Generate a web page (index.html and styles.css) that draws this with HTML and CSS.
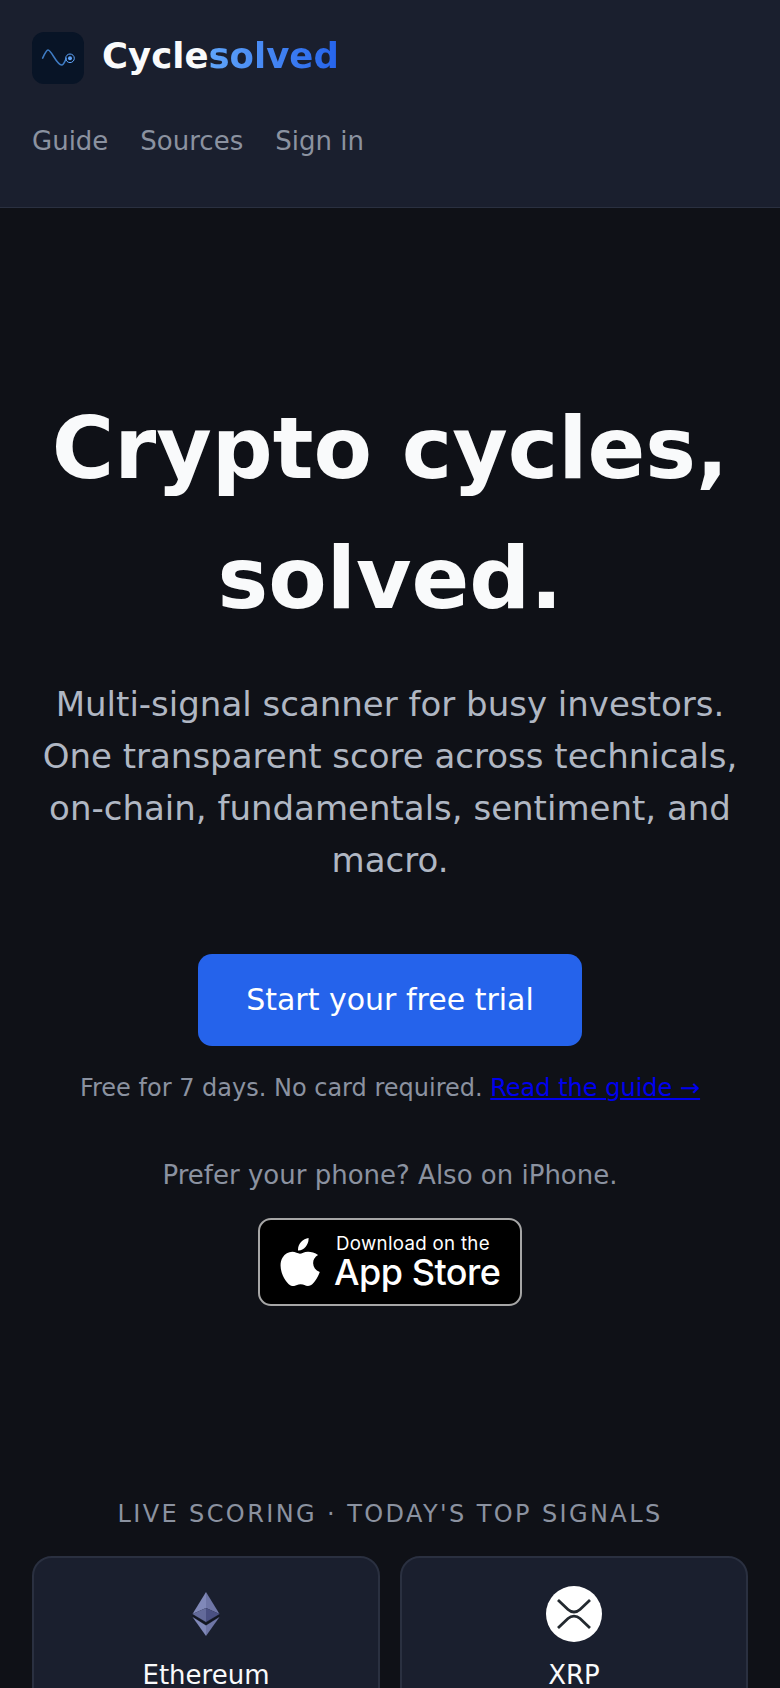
FILE: index.html
```html
<!DOCTYPE html>
<html lang="en">
<head>
<meta charset="utf-8">
<title>Cyclesolved</title>
<link rel="stylesheet" href="styles.css">
</head>
<body>
<header class="site-header">
  <a class="brand">
    <svg class="brand-mark" viewBox="0 0 52 52" aria-hidden="true">
      <rect width="52" height="52" rx="12" fill="#081426"/>
      <path d="M10.700 26C12.500 22 14.300 18 16 18C19.500 18 24.500 33 29.700 33C31.700 33 33 29 34.300 26.500" fill="none" stroke="#3f7cc4" stroke-width="1.700" stroke-linecap="round"/>
      <circle cx="38" cy="26.300" r="4.300" fill="none" stroke="#60a5fa" stroke-width="1"/>
      <circle cx="38" cy="26.300" r="2" fill="#60a5fa"/>
    </svg>
    <span class="brand-name">Cycle<span class="brand-accent">solved</span></span>
  </a>
  <nav class="site-nav">
    <a>Guide</a>
    <a>Sources</a>
    <a>Sign in</a>
  </nav>
</header>
<main>
  <section class="hero">
    <h1>Crypto cycles, solved.</h1>
    <p class="lede">Multi-signal scanner for busy investors. One transparent score across technicals, on-chain, fundamentals, sentiment, and macro.</p>
    <a class="cta">Start your free trial</a>
    <p class="fine">Free for 7 days. No card required. <a href="#guide">Read the guide →</a></p>
    <p class="phone">Prefer your phone? Also on iPhone.</p>
    <a class="store">
      <svg class="apple" viewBox="3.500 2 35 43" aria-hidden="true" preserveAspectRatio="none">
        <path fill="#fff" d="M28.500 2C28.700 5.500 27.500 8 25.800 10C24 12.100 21.800 13.300 19.300 13.100C19 10 20.300 7.300 21.900 5.500C23.600 3.500 26.300 2.200 28.500 2ZM36.800 17.300C33.900 19.100 32.400 21.500 32.500 24.700C32.600 28.400 34.600 31 38.300 32.500C37.400 35.300 36 37.900 34.300 40.300C32.500 42.800 30.700 45 28 45C25.400 45 24.500 43.500 21.500 43.500C18.500 43.500 17.500 45 15 45.100C12.300 45.200 10.200 42.600 8.400 40C4.800 34.800 2 25.800 5.800 19.500C7.700 16.400 10.900 14.400 14.300 14.400C16.900 14.400 19.200 16.100 20.900 16.100C22.500 16.100 25.100 14.100 28.300 14.300C30.500 14.400 34.300 14.900 36.800 17.300Z"/>
      </svg>
      <span class="store-text">
        <span class="store-small">Download on the</span>
        <span class="store-big">App Store</span>
      </span>
    </a>
  </section>
  <section class="signals">
    <h2>LIVE SCORING · TODAY'S TOP SIGNALS</h2>
    <div class="signal-grid">
      <article class="signal-card">
        <svg class="coin" viewBox="0 0 56 56" aria-hidden="true">
          <polygon points="28,6 14.500,28 28,22" fill="#8088b8"/>
          <polygon points="28,6 41.500,28 28,22" fill="#6f76a6"/>
          <polygon points="14.500,28 28,22 28,36" fill="#636a9a"/>
          <polygon points="41.500,28 28,22 28,36" fill="#4a5082"/>
          <polygon points="14.500,31 28,39.500 28,50" fill="#8088b8"/>
          <polygon points="41.500,31 28,39.500 28,50" fill="#6f76a6"/>
          <polyline points="14.500,29.500 28,37.700 41.500,29.500" fill="none" stroke="#12151f" stroke-width="1.300"/>
        </svg>
        <h3>Ethereum</h3>
      </article>
      <article class="signal-card">
        <svg class="coin" viewBox="0 0 56 56" aria-hidden="true">
          <circle cx="28" cy="28" r="28" fill="#fff"/>
          <path d="M12 14L22 23.500C25.500 26.800 30.500 26.800 34 23.500L44 14M12 42L22 32.500C25.500 29.200 30.500 29.200 34 32.500L44 42" fill="none" stroke="#23292f" stroke-width="2.800"/>
        </svg>
        <h3>XRP</h3>
      </article>
    </div>
  </section>
</main>
</body>
</html>
```
FILE: styles.css
```css
* { box-sizing: border-box; }
html, body { margin: 0; padding: 0; }
html { height: 1688px; overflow: hidden; }
body {
  height: 1688px;
  overflow: hidden;
  background: #0f1117;
  color: #f9fafb;
  font-family: "DejaVu Sans", sans-serif;
}
.site-header {
  height: 208px;
  padding: 32px 32px 0;
  background: #1a1f2e;
  border-bottom: 1px solid #2a3040;
}
.brand { display: flex; align-items: center; gap: 18px; height: 52px; }
.brand-mark { width: 52px; height: 52px; flex: none; }
.brand-name { font-size: 35.500px; font-weight: 700; padding-bottom: 6px; }
.brand-accent {
  background: linear-gradient(90deg, #60a5fa, #2563eb);
  -webkit-background-clip: text;
  background-clip: text;
  color: transparent;
}
.site-nav { display: flex; gap: 32px; margin-top: 42px; font-size: 26px; line-height: 30px; color: #8b92a0; }
.hero { padding: 176px 32px 0; text-align: center; display: flex; flex-direction: column; align-items: center; }
h1 { margin: 0; font-size: 85.200px; line-height: 130px; font-weight: 700; color: #f9fafb; }
.lede { margin: 34px 0 0; font-size: 34px; line-height: 52px; color: #b0b7c3; }
.cta {
  margin-top: 68px; width: 384px; height: 92px; padding-bottom: 2px;
  display: flex; align-items: center; justify-content: center;
  background: #2563eb; border-radius: 14px; color: #fff; font-size: 30px;
}
.fine { margin: 24px 0 0; font-size: 24px; line-height: 36px; color: #8b92a0; }
.fine a { color: #0000ee; text-decoration: underline; }
.phone { margin: 51px 0 0; font-size: 26px; line-height: 36px; color: #8b92a0; }
.store {
  margin-top: 25px; width: 264px; height: 88px;
  display: flex; align-items: center; gap: 14px; padding-left: 20px;
  background: #000; border: 2px solid #a6a6a6; border-radius: 13px; text-align: left;
}
.apple { width: 40px; height: 48px; flex: none; }
.store-text { display: flex; flex-direction: column; font-family: "Inter", "Liberation Sans", sans-serif; color: #fff; }
.store-small { padding-left: 2px; font-size: 18.700px; line-height: 20px; letter-spacing: 0.3px; }
.store-big { font-size: 36px; line-height: 36px; font-weight: 500; letter-spacing: -0.5px; }
.signals { padding: 193px 32px 0; }
h2 { margin: 0; text-align: center; font-size: 24px; line-height: 30px; font-weight: 400; letter-spacing: 2.400px; color: #8b92a0; }
.signal-grid { margin-top: 27px; display: grid; grid-template-columns: 1fr 1fr; gap: 20px; }
.signal-card {
  height: 300px; padding: 28px 20px; text-align: center;
  background: #1a1f2e; border: 2px solid #2a3040; border-radius: 20px;
}
.coin { display: block; width: 56px; height: 56px; margin: 0 auto; }
h3 { margin: 15px 0 0; font-size: 26px; line-height: 36px; font-weight: 400; color: #f9fafb; }
```
